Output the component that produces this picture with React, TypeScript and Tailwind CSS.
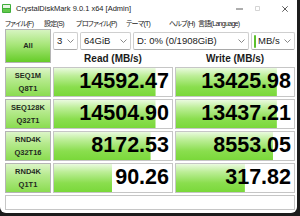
import React from 'react';

type Row = { l1: string; l2: string; r: number; w: number };

const rows: Row[] = [
  { l1: 'SEQ1M', l2: 'Q8T1', r: 14592.47, w: 13425.98 },
  { l1: 'SEQ128K', l2: 'Q32T1', r: 14504.9, w: 13437.21 },
  { l1: 'RND4K', l2: 'Q32T16', r: 8172.53, w: 8553.05 },
  { l1: 'RND4K', l2: 'Q1T1', r: 90.26, w: 317.82 },
];

function meter(v: number): number {
  const m = Math.log10(v * 10) / 6;
  return Math.max(0, Math.min(1, m));
}

function Chevron() {
  return (
    <svg width="7" height="4" viewBox="0 0 7 4" className="shrink-0">
      <polyline points="0.5,0.5 3.5,3.5 6.5,0.5" fill="none" stroke="#7a7a7a" strokeWidth="0.9" />
    </svg>
  );
}

function Combo({ w, text, accent }: { w: string; text: string; accent?: boolean }) {
  return (
    <div
      className={`${w} flex h-[18px] items-center justify-between rounded-[2px] border border-[#cfcfcf] border-b-[#a9a9a9] bg-white pr-[3px] ${accent ? 'pl-[2px]' : 'pl-[3px]'}`}
    >
      <div className="flex items-center">
        {accent && <div className="mr-[2px] h-[13px] w-[2px] rounded-[1px] bg-[#5cc02c]" />}
        <span className="text-[9.5px] leading-none text-[#1a1a1a]">{text}</span>
      </div>
      <Chevron />
    </div>
  );
}

function ValueBox({ v }: { v: number }) {
  return (
    <div
      className="flex h-full items-center justify-end border border-[#c6c6c6] bg-white bg-[linear-gradient(180deg,#eafadf_0%,#bdee98_28%,#8ade4e_68%,#7ad83a_100%)] bg-no-repeat pr-[3px]"
      style={{ backgroundSize: `${(meter(v) * 100).toFixed(2)}% 100%` }}
    >
      <span className="text-[21.5px] font-bold leading-none text-black">{v.toFixed(2)}</span>
    </div>
  );
}

function LabelBox({ l1, l2 }: { l1: string; l2: string }) {
  return (
    <div className="flex h-full w-[46px] flex-col items-center justify-center border border-[#b4b4b4] bg-[linear-gradient(180deg,#dcf5c8_0%,#b6ea8e_40%,#8adc50_100%)] text-[7.5px] font-bold leading-[13px] text-[#1f2a1f]">
      <span>{l1}</span>
      <span>{l2}</span>
    </div>
  );
}

export default function App() {
  const menu: { t: string; w: string }[] = [
    { t: 'ファイル(F)', w: 'w-[39px]' },
    { t: '設定(S)', w: 'w-[32px]' },
    { t: 'プロファイル(P)', w: 'w-[50px]' },
    { t: 'テーマ(T)', w: 'w-[43px]' },
    { t: 'ヘルプ(H)', w: 'w-[29px]' },
    { t: '言語(Language)', w: 'w-[60px]' },
  ];

  return (
    <div className="h-[216px] w-[300px] overflow-hidden bg-[#1c1c1c] font-['Liberation_Sans','Noto_Sans_CJK_JP',sans-serif]">
      <div className="flex h-[213px] w-[297px] flex-col overflow-hidden rounded-b-[6px] bg-white">
        {/* title bar */}
        <div className="flex h-[17px] items-center">
          <svg width="9" height="9" viewBox="0 0 9 9" className="ml-[2px] shrink-0">
            <rect x="0" y="0" width="9" height="9" rx="1" fill="#3fae3a" />
            <rect x="1" y="1" width="7" height="3" fill="#e8f5e4" />
            <rect x="1" y="5" width="7" height="3" fill="#62c84a" />
          </svg>
          <span className="ml-[5px] text-[7.5px] leading-none text-[#1a1a1a]">CrystalDiskMark 9.0.1 x64 [Admin]</span>
          <div className="ml-auto mr-[9px] flex items-center">
            <svg width="7" height="2" viewBox="0 0 7 2" className="shrink-0">
              <line x1="0" y1="1" x2="7" y2="1" stroke="#333" strokeWidth="0.8" />
            </svg>
            <svg width="5" height="5" viewBox="0 0 5 5" className="ml-[12px] shrink-0">
              <rect x="0.4" y="0.4" width="4.2" height="4.2" rx="0.6" fill="none" stroke="#c4c4c4" strokeWidth="0.8" />
            </svg>
            <svg width="6" height="6" viewBox="0 0 6 6" className="ml-[22px] shrink-0">
              <line x1="0.3" y1="0.3" x2="5.7" y2="5.7" stroke="#333" strokeWidth="0.8" />
              <line x1="5.7" y1="0.3" x2="0.3" y2="5.7" stroke="#333" strokeWidth="0.8" />
            </svg>
          </div>
        </div>

        {/* menu bar */}
        <div className="flex h-[12px] items-center pl-[5px] text-[7px] leading-none tracking-[-0.7px] text-[#1a1a1a] [font-feature-settings:'palt'_1]">
          {menu.map((m) => (
            <span key={m.t} className={`${m.w} shrink-0 whitespace-nowrap`}>
              {m.t}
            </span>
          ))}
        </div>

        {/* main */}
        <div className="flex flex-col gap-[2px] pl-[5px] pr-[2px]">
          <div className="flex h-[36px] gap-[2px]">
            <div className="flex h-[34px] w-[46px] items-center justify-center border border-[#b4b4b4] bg-[linear-gradient(180deg,#d6f4c0_0%,#a8e67a_45%,#66cc28_100%)] text-[7.5px] font-bold text-[#1f2a1f]">
              All
            </div>
            <div className="flex flex-1 flex-col">
              <div className="mt-[3px] flex gap-[2px]">
                <Combo w="w-[25px]" text="3" />
                <Combo w="w-[51px]" text="64GiB" />
                <Combo w="w-[116px]" text="D: 0% (0/1908GiB)" />
                <Combo w="w-[44px]" text="MB/s" accent />
              </div>
              <div className="flex h-[15px] items-end gap-[2px] pb-[1px]">
                <div className="w-[120px] text-center text-[10px] font-bold leading-[10px] text-[#1a1a1a]">Read (MB/s)</div>
                <div className="w-[120px] text-center text-[10px] font-bold leading-[10px] text-[#1a1a1a]">Write (MB/s)</div>
              </div>
            </div>
          </div>

          {rows.map((r, i) => (
            <div key={i} className="grid h-[30px] grid-cols-[46px_120px_120px] gap-[2px]">
              <LabelBox l1={r.l1} l2={r.l2} />
              <ValueBox v={r.r} />
              <ValueBox v={r.w} />
            </div>
          ))}

          <div className="h-[15px] w-[290px] border border-[#c6c6c6] bg-white" />
        </div>
      </div>
    </div>
  );
}
